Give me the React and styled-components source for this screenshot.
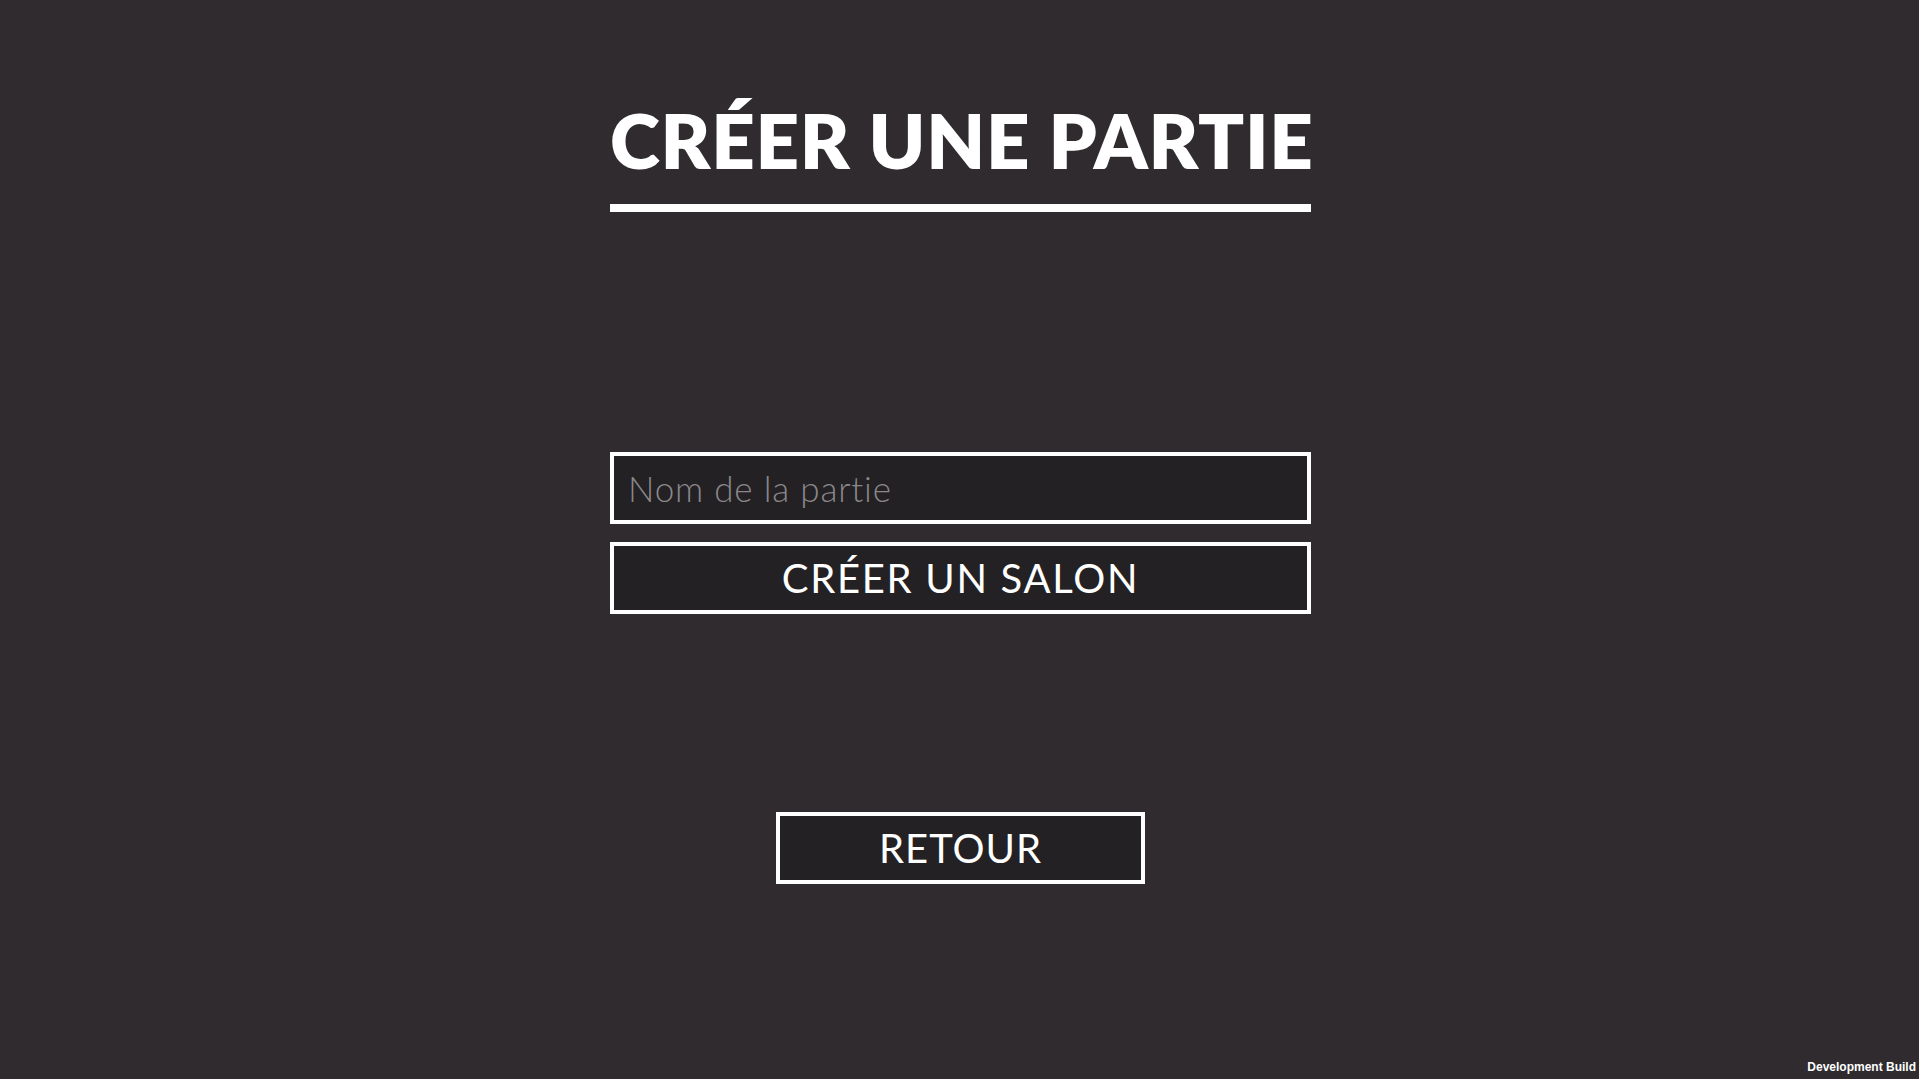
import React from 'react';
import styled, { createGlobalStyle } from 'styled-components';

const GlobalStyle = createGlobalStyle`
  html, body {
    margin: 0;
    padding: 0;
    background: #2f2b2f;
  }
  * {
    box-sizing: border-box;
  }
`;

const Page = styled.div`
  position: relative;
  min-height: 100vh;
  background: #2f2b2f;
  display: flex;
  flex-direction: column;
  align-items: center;
  padding-left: 2px;
  font-family: "Lato", "Liberation Sans", sans-serif;
  font-variant-ligatures: none;
  color: #fff;
`;

const Header = styled.div`
  width: 701px;
  margin-top: 102px;
  display: flex;
  flex-direction: column;
`;

const Title = styled.h1`
  margin: 0;
  font-size: 76px;
  line-height: 76px;
  font-weight: 800;
  letter-spacing: 0.7px;
  text-align: center;
  white-space: nowrap;
`;

const Rule = styled.div`
  margin-top: 26px;
  height: 8px;
  background: #ffffff;
`;

const Form = styled.div`
  width: 701px;
  margin-top: 240px;
  display: flex;
  flex-direction: column;
  gap: 18px;
`;

const Field = styled.input`
  height: 72px;
  width: 100%;
  border: 4px solid #ffffff;
  background: #232124;
  color: #fff;
  padding: 0 14px;
  font-family: "Lato", "Liberation Sans", sans-serif;
  font-variant-ligatures: none;
  font-weight: 300;
  font-size: 35px;
  letter-spacing: 0.8px;
  outline: none;

  &::placeholder {
    color: #8a878a;
    opacity: 1;
  }
`;

const Button = styled.button`
  width: ${p => p.width || '100%'};
  height: 72px;
  border: 4px solid #ffffff;
  background: #232124;
  color: #fff;
  font-family: "Lato", "Liberation Sans", sans-serif;
  font-weight: 400;
  font-size: 40px;
  letter-spacing: ${p => p.spacing || '1.7px'};
  cursor: pointer;
  padding: 0;
`;

const Footer = styled.div`
  margin-top: 198px;
  display: flex;
  justify-content: center;
`;

const BuildTag = styled.div`
  position: absolute;
  right: 3px;
  bottom: 5px;
  font-family: "Liberation Sans", sans-serif;
  font-weight: 700;
  font-size: 12px;
  color: #fff;
`;

export default function App() {
  return (
    <Page>
      <GlobalStyle />
      <Header>
        <Title>CRÉER UNE PARTIE</Title>
        <Rule />
      </Header>
      <Form>
        <Field placeholder="Nom de la partie" />
        <Button>CRÉER UN SALON</Button>
      </Form>
      <Footer>
        <Button width="369px" spacing="1px">RETOUR</Button>
      </Footer>
      <BuildTag>Development Build</BuildTag>
    </Page>
  );
}
